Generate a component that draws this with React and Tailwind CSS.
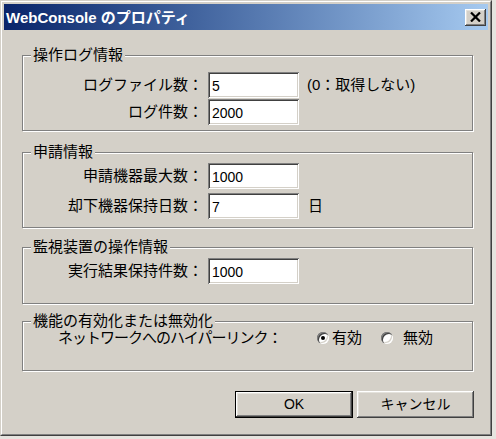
import React from 'react';

// Win2000-style bevels, written out in full so Tailwind picks them up
const raised =
  'shadow-[inset_-1px_-1px_0_#404040,inset_1px_1px_0_#ffffff,inset_-2px_-2px_0_#808080,inset_2px_2px_0_#e4e2dc]';
const sunken =
  'shadow-[inset_1px_1px_0_#808080,inset_-1px_-1px_0_#ffffff,inset_2px_2px_0_#404040,inset_-2px_-2px_0_#d4d0c8]';

const Group = ({ title, className = '', children }) => (
  <div
    className={`ml-[18px] w-[451px] border border-[#808080] shadow-[inset_1px_1px_0_#ffffff,1px_1px_0_#ffffff] ${className}`}
  >
    <div className="-mt-[9px] ml-[8px] w-fit bg-[#d4d0c8] px-[2px] leading-[16px]">{title}</div>
    {children}
  </div>
);

const Field = ({ label, value, after, afterClass = '' }) => (
  <div className="flex items-center">
    <div className="w-[180px] text-right whitespace-nowrap">{label}</div>
    <input
      readOnly
      value={value}
      className={`ml-[5px] h-[26px] w-[91px] bg-white px-[4px] pt-[1px] text-[14px] text-black outline-none ${sunken}`}
    />
    {after && <span className={`whitespace-nowrap ${afterClass}`}>{after}</span>}
  </div>
);

const Radio = ({ checked }) => (
  <span
    className="flex h-[12px] w-[12px] items-center justify-center rounded-full bg-white shadow-[inset_1px_1px_0_#808080,inset_2px_2px_0_#404040,inset_-1px_-1px_0_#ffffff,inset_-2px_-2px_0_#d4d0c8]"
  >
    {checked && <span className="h-[4px] w-[4px] rounded-full bg-black" />}
  </span>
);

export default function App() {
  return (
    <div className="h-[439px] w-[496px] bg-[#e6e4df] font-['Liberation_Sans','Noto_Sans_CJK_JP',sans-serif] text-[15px] text-black">
      <div className="h-[436px] w-[492px] border border-t-[#d4d0c8] border-l-[#d4d0c8] border-r-[#404040] border-b-[#404040]">
        <div className="h-full w-full border border-t-white border-l-white border-r-[#808080] border-b-[#808080] bg-[#d4d0c8] p-[2px]">
          {/* title bar */}
          <div className="flex h-[26px] items-center justify-between bg-linear-to-r from-[#0a246a] to-[#a6caf0] pl-[2px] pr-[2px]">
            <span className="text-[15px] font-bold leading-none text-white whitespace-nowrap">
              WebConsole のプロパティ
            </span>
            <button className={`flex h-[17px] w-[21px] items-center justify-center bg-[#d4d0c8] ${raised}`}>
              <svg width="11" height="10" viewBox="0 0 11 10">
                <path d="M1 0.5 L10 9.5 M10 0.5 L1 9.5" stroke="#000" strokeWidth="2.2" />
              </svg>
            </button>
          </div>

          <Group title="操作ログ情報" className="mt-[25px] pb-[5px]">
            <div className="mt-[9px] flex flex-col gap-[1px]">
              <Field label="ログファイル数：" value="5" after="(0：取得しない)" afterClass="ml-[8px]" />
              <Field label="ログ件数：" value="2000" />
            </div>
          </Group>

          <Group title="申請情報" className="mt-[21px] pb-[8px]">
            <div className="mt-[3px] flex flex-col gap-[4px]">
              <Field label="申請機器最大数：" value="1000" />
              <Field label="却下機器保持日数：" value="7" after="日" afterClass="ml-[9px]" />
            </div>
          </Group>

          <Group title="監視装置の操作情報" className="mt-[19px] pb-[19px]">
            <div className="mt-[3px]">
              <Field label="実行結果保持件数：" value="1000" />
            </div>
          </Group>

          <Group title="機能の有効化または無効化" className="mt-[17px] pb-[23px]">
            <div className="flex h-[18px] items-center pl-[35px]">
              <span className="w-[259px] whitespace-nowrap tracking-[-1px]">ネットワークへのハイパーリンク：</span>
              <Radio checked />
              <span className="ml-[3px]">有効</span>
              <span className="ml-[19px]">
                <Radio />
              </span>
              <span className="ml-[10px]">無効</span>
            </div>
          </Group>

          <div className="mt-[20px] flex justify-end gap-[4px] pr-[14px]">
            <button
              className={`flex h-[27px] w-[118px] items-center justify-center border border-black bg-[#d4d0c8] text-[14px] ${raised}`}
            >
              OK
            </button>
            <button
              className={`flex h-[27px] w-[117px] items-center justify-center bg-[#d4d0c8] text-[14px] ${raised}`}
            >
              キャンセル
            </button>
          </div>
        </div>
      </div>
    </div>
  );
}
